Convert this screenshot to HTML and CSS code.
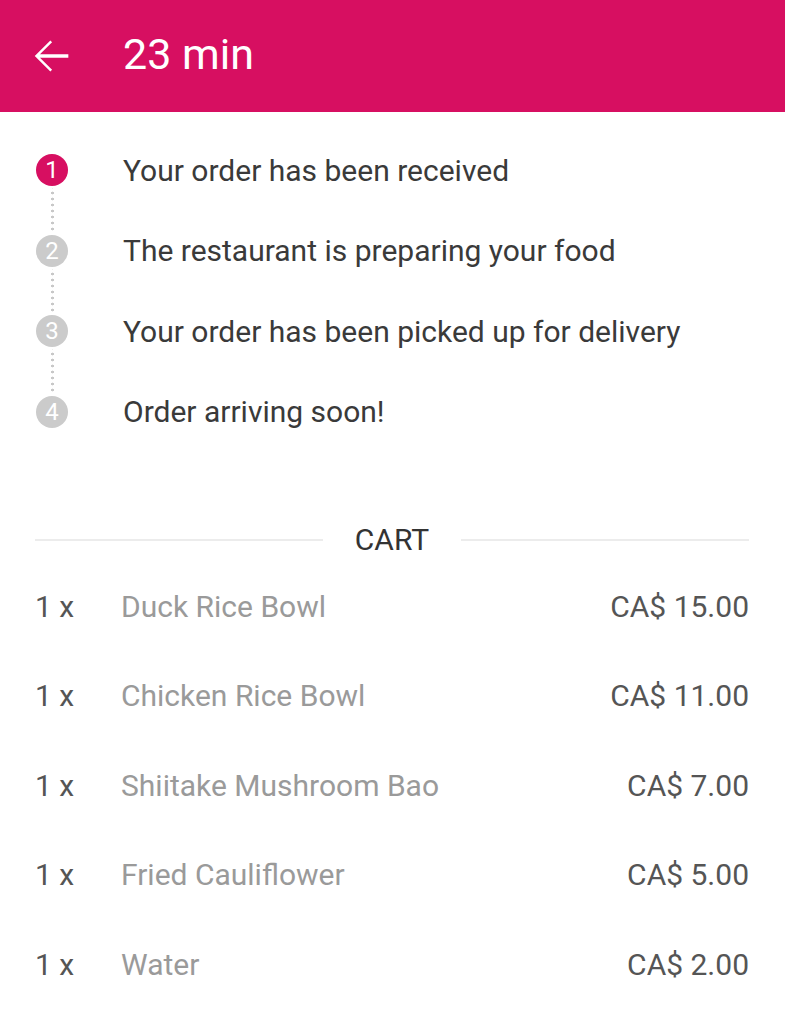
FILE: index.html
```html
<!DOCTYPE html>
<html>
<head>
<meta charset="utf-8">
<link rel="stylesheet" href="styles.css">
</head>
<body>
<header class="bar">
  <svg class="back" width="52" height="52" viewBox="0 0 24 24"><path d="M20 11.2H6.9l5.6-5.6L11.7 4.8 4.5 12l7.2 7.2.8-.8-5.6-5.6H20z" fill="#fff"/></svg>
  <span class="title">23 min</span>
</header>
<section class="steps">
  <div class="step">
    <span class="dot active">1</span><span class="label">Your order has been received</span>
  </div>
  <div class="link"></div>
  <div class="step">
    <span class="dot">2</span><span class="label">The restaurant is preparing your food</span>
  </div>
  <div class="link"></div>
  <div class="step">
    <span class="dot">3</span><span class="label">Your order has been picked up for delivery</span>
  </div>
  <div class="link"></div>
  <div class="step">
    <span class="dot">4</span><span class="label">Order arriving soon!</span>
  </div>
</section>
<section class="cart">
  <div class="divider"><span class="rule"></span><span class="cart-title">CART</span><span class="rule"></span></div>
  <div class="row"><span class="qty">1 x</span><span class="name">Duck Rice Bowl</span><span class="price">CA$ 15.00</span></div>
  <div class="row"><span class="qty">1 x</span><span class="name">Chicken Rice Bowl</span><span class="price">CA$ 11.00</span></div>
  <div class="row"><span class="qty">1 x</span><span class="name">Shiitake Mushroom Bao</span><span class="price">CA$ 7.00</span></div>
  <div class="row"><span class="qty">1 x</span><span class="name">Fried Cauliflower</span><span class="price">CA$ 5.00</span></div>
  <div class="row"><span class="qty">1 x</span><span class="name">Water</span><span class="price">CA$ 2.00</span></div>
</section>
</body>
</html>
```
FILE: styles.css
```css
* { box-sizing: border-box; }
body {
  margin: 0;
  font-family: Roboto, "Liberation Sans", sans-serif;
  background: #fff;
  width: 785px;
}
.bar {
  height: 112px;
  background: #d70f61;
  display: flex;
  align-items: center;
  padding-left: 25px;
}
.back { margin-right: 46px; }
.title {
  color: #fff;
  font-size: 43px;
  line-height: 1;
  padding-bottom: 4px;
}
.steps {
  padding: 40px 0 0 36px;
  display: flex;
  flex-direction: column;
}
.step {
  display: flex;
  align-items: center;
  height: 36px;
}
.dot {
  width: 32px;
  height: 32px;
  border-radius: 50%;
  background: #cbcbcb;
  color: #fff;
  font-size: 24px;
  display: flex;
  align-items: center;
  justify-content: center;
  flex: none;
}
.dot.active { background: #d70f61; }
.label {
  margin-left: 55px;
  font-size: 30px;
  color: #3a3a3a;
}
.link {
  height: 44.5px;
  margin-left: 15px;
  width: 3px;
  background: radial-gradient(circle, #c8c8c8 1.3px, transparent 1.6px) 0 2px / 3px 6px repeat-y;
}
.cart {
  padding: 92px 36px 0 35px;
}
.divider {
  display: flex;
  align-items: center;
  height: 36px;
}
.rule {
  flex: 1;
  height: 2px;
  background: #ececec;
}
.cart-title {
  font-size: 30px;
  color: #333;
  padding: 0 32px;
}
.row {
  display: flex;
  align-items: center;
  height: 89.5px;
  font-size: 30px;
}
.qty { width: 86px; color: #555; }
.name { flex: 1; color: #9a9a9a; }
.price { color: #555; }
.divider + .row { margin-top: 4px; }
```
